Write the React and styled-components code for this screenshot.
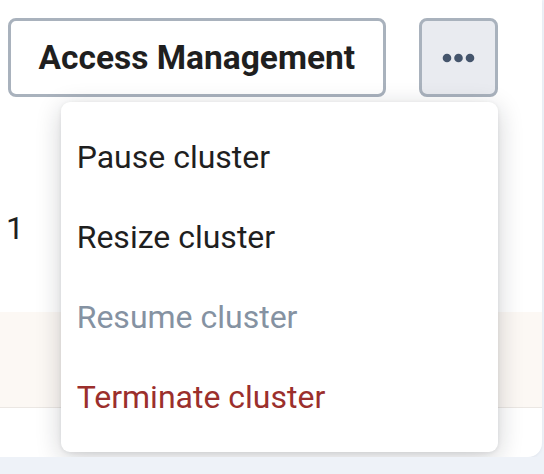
import styled, { createGlobalStyle } from "styled-components";

const GlobalStyle = createGlobalStyle`
  html, body {
    margin: 0;
    padding: 0;
    background: #eef2f8;
  }
  body {
    font-family: Roboto, "Liberation Sans", sans-serif;
    color: #1f1f1f;
  }
`;

const Page = styled.div`
  width: 542px;
  height: 457px;
  background: #ffffff;
  border-bottom-right-radius: 14px;
  box-shadow: 0 1px 3px rgba(30, 40, 60, 0.06);
  display: flex;
  flex-direction: column;
`;

const Toolbar = styled.div`
  display: flex;
  align-items: center;
  gap: 33px;
  padding: 18px 0 0 8px;
`;

const Button = styled.button`
  box-sizing: border-box;
  height: 79px;
  border: 3px solid #a9b2bd;
  border-radius: 8px;
  background: ${(p) => (p.$muted ? "#e9ebf0" : "#ffffff")};
  font-family: Roboto, "Liberation Sans", sans-serif;
  font-weight: 700;
  font-size: 33.5px;
  color: #1f1f1f;
  padding: 0 27.5px;
  display: flex;
  align-items: center;
  justify-content: center;
  cursor: pointer;
`;

const IconButton = styled(Button)`
  width: 79px;
  padding: 0;
`;

const MenuAnchor = styled.div`
  position: relative;
`;

const Menu = styled.ul`
  position: absolute;
  top: 84px;
  right: 0;
  width: 437px;
  box-sizing: border-box;
  margin: 0;
  padding: 15px 0;
  list-style: none;
  background: #ffffff;
  border-radius: 9px;
  box-shadow: 0 6px 26px rgba(20, 25, 35, 0.2), 0 1px 4px rgba(20, 25, 35, 0.08);
  z-index: 10;
`;

const MenuItem = styled.li`
  height: 80px;
  display: flex;
  align-items: center;
  padding-left: 16px;
  font-size: 32px;
  color: ${(p) =>
    p.$tone === "disabled" ? "#8592a2" : p.$tone === "danger" ? "#9b2f2c" : "#1f1f1f"};
  cursor: ${(p) => (p.$tone === "disabled" ? "default" : "pointer")};
`;

const Table = styled.div`
  flex: 1;
  display: flex;
  flex-direction: column;
  padding-top: 5px;
`;

const Row = styled.div`
  box-sizing: border-box;
  height: ${(p) => p.$h}px;
  display: flex;
  align-items: center;
  padding: ${(p) => p.$pt || 0}px 0 0 6px;
  font-size: 32px;
  background: ${(p) => (p.$tint ? "#fcf8f4" : "transparent")};
  border-bottom: ${(p) => (p.$tint ? "1px solid #ebe7e3" : "none")};
`;

const Dots = () => (
  <svg width="33" height="10" viewBox="0 0 33 10">
    <circle cx="5" cy="5" r="4.3" fill="#45556c" />
    <circle cx="16.5" cy="5" r="4.3" fill="#45556c" />
    <circle cx="28" cy="5" r="4.3" fill="#45556c" />
  </svg>
);

export default function App() {
  return (
    <>
      <GlobalStyle />
      <Page>
        <Toolbar>
          <Button>Access Management</Button>
          <MenuAnchor>
            <IconButton $muted aria-label="More actions">
              <Dots />
            </IconButton>
            <Menu>
              <MenuItem>Pause cluster</MenuItem>
              <MenuItem>Resize cluster</MenuItem>
              <MenuItem $tone="disabled">Resume cluster</MenuItem>
              <MenuItem $tone="danger">Terminate cluster</MenuItem>
            </Menu>
          </MenuAnchor>
        </Toolbar>
        <Table>
          <Row $h={210} $pt={42}>1</Row>
          <Row $h={96} $tint />
        </Table>
      </Page>
    </>
  );
}
